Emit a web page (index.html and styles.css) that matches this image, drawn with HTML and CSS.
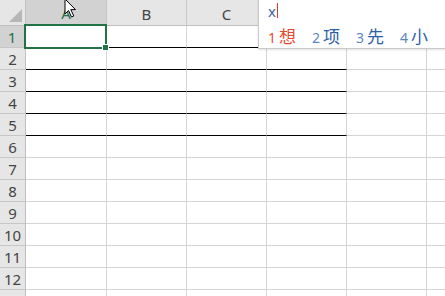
FILE: index.html
```html
<!DOCTYPE html>
<html lang="en">

<head>
    <meta charset="UTF-8">
    <title>Sheet1</title>
    <link rel="stylesheet" href="styles.css">
</head>

<body>

    <div class="workbook">
        <!-- Grid cells are filled in by the script below -->
        <div class="sheet" id="sheet"></div>

        <!-- Active cell A1 -->
        <div class="selection"><span class="handle"></span></div>

        <!-- IME candidate window -->
        <div class="ime">
            <div class="ime-input">x<span class="caret"></span></div>
            <div class="ime-list">
                <span class="cand first"><b>1</b>想</span>
                <span class="cand"><b>2</b>项</span>
                <span class="cand"><b>3</b>先</span>
                <span class="cand"><b>4</b>小</span>
            </div>
        </div>

        <svg class="pointer" width="14" height="21" viewBox="0 0 14 21">
            <path d="M1 1 L1 16 L4.5 12.5 L7.5 19 L9.8 18 L6.8 11.6 L11.5 11.6 Z" fill="#fff" stroke="#000" stroke-width="1" stroke-linejoin="round" />
        </svg>
    </div>

    <script>
        // last column and last row are only partly in view, so no label
        const columns = ["A", "B", "C", "D", "E", ""];
        const rowCount = 13;

        // which cells get a black bottom border
        function hasLine(row, col) {
            if (col > 3) return false;
            if (row === 1) return col >= 1;
            return row >= 2 && row <= 5;
        }

        function renderSheet() {
            const sheet = document.getElementById("sheet");
            let html = `<div class="cell head corner"><svg width="26" height="26"><path d="M22 9 L22 22 L9 22 Z" fill="#b7b7b7" /></svg></div>`;

            columns.forEach((name, i) => {
                html += `<div class="cell head col${i === 0 ? " sel" : ""}">${name}</div>`;
            });

            for (let r = 1; r <= rowCount; r++) {
                const label = r < rowCount ? r : "";
                html += `<div class="cell head row${r === 1 ? " sel" : ""}">${label}</div>`;
                columns.forEach((name, c) => {
                    html += `<div class="cell${hasLine(r, c) ? " line" : ""}"></div>`;
                });
            }

            sheet.innerHTML = html;
        }

        renderSheet();
    </script>

</body>

</html>
```

FILE: styles.css
```css
body {
    margin: 0;
    background-color: #fff;
    font-family: "Noto Sans", "Noto Sans CJK SC", sans-serif;
    overflow: hidden;
}

.workbook {
    position: relative;
    width: 445px;
    height: 296px;
    overflow: hidden;
}

.sheet {
    display: grid;
    grid-template-columns: 26px 81px repeat(5, 80px);
    grid-template-rows: 26px;
    grid-auto-rows: 22px;
}

.cell {
    box-sizing: border-box;
    border-right: 1px solid #d6d6d6;
    border-bottom: 1px solid #d4d4d4;
}

.cell.line {
    border-bottom-color: #000;
}

.head {
    display: flex;
    align-items: center;
    justify-content: center;
    background-color: #e6e6e6;
    border-color: #bfbfbf;
    color: #444;
    font-size: 15px;
}

.head.col {
    align-items: flex-end;
    padding-bottom: 1px;
    border-right-color: #c6c6c6;
}

.head.row {
    border-bottom-color: #c6c6c6;
}

.head.sel {
    background-color: #d2d2d2;
    color: #217346;
}

.head.col.sel {
    border-bottom: 2px solid #217346;
}

.head.row.sel {
    border-right: 2px solid #217346;
}

.corner {
    background-color: #e6e6e6;
}

.selection {
    position: absolute;
    left: 24px;
    top: 24px;
    width: 83px;
    height: 25px;
    box-sizing: border-box;
    border: 2px solid #217346;
}

.handle {
    position: absolute;
    right: -4px;
    bottom: -4px;
    width: 5px;
    height: 5px;
    background-color: #217346;
    border: 1px solid #fff;
}

.ime {
    position: absolute;
    left: 258px;
    top: -1px;
    width: 200px;
    height: 50px;
    box-sizing: border-box;
    background-color: #fff;
    border: 1px solid #c9c9c9;
    box-shadow: 0 1px 2px rgba(0, 0, 0, 0.12);
}

.ime-input {
    display: flex;
    align-items: center;
    height: 21px;
    padding-left: 9px;
    color: #3d62a8;
    font-size: 15px;
}

.caret {
    display: inline-block;
    width: 1px;
    height: 15px;
    margin-left: 1px;
    background-color: #e0382c;
}

.ime-list {
    display: flex;
    gap: 16px;
    padding-left: 9px;
    margin-top: 2px;
    font-family: "Noto Sans CJK SC", sans-serif;
    font-size: 17px;
    color: #2d5fa6;
}

.cand b {
    font-family: "Noto Sans", sans-serif;
    font-weight: normal;
    font-size: 14px;
    margin-right: 3px;
    color: #5a86c4;
}

.cand.first,
.cand.first b {
    color: #e8472e;
}

.pointer {
    position: absolute;
    left: 64px;
    top: -2px;
}
```
